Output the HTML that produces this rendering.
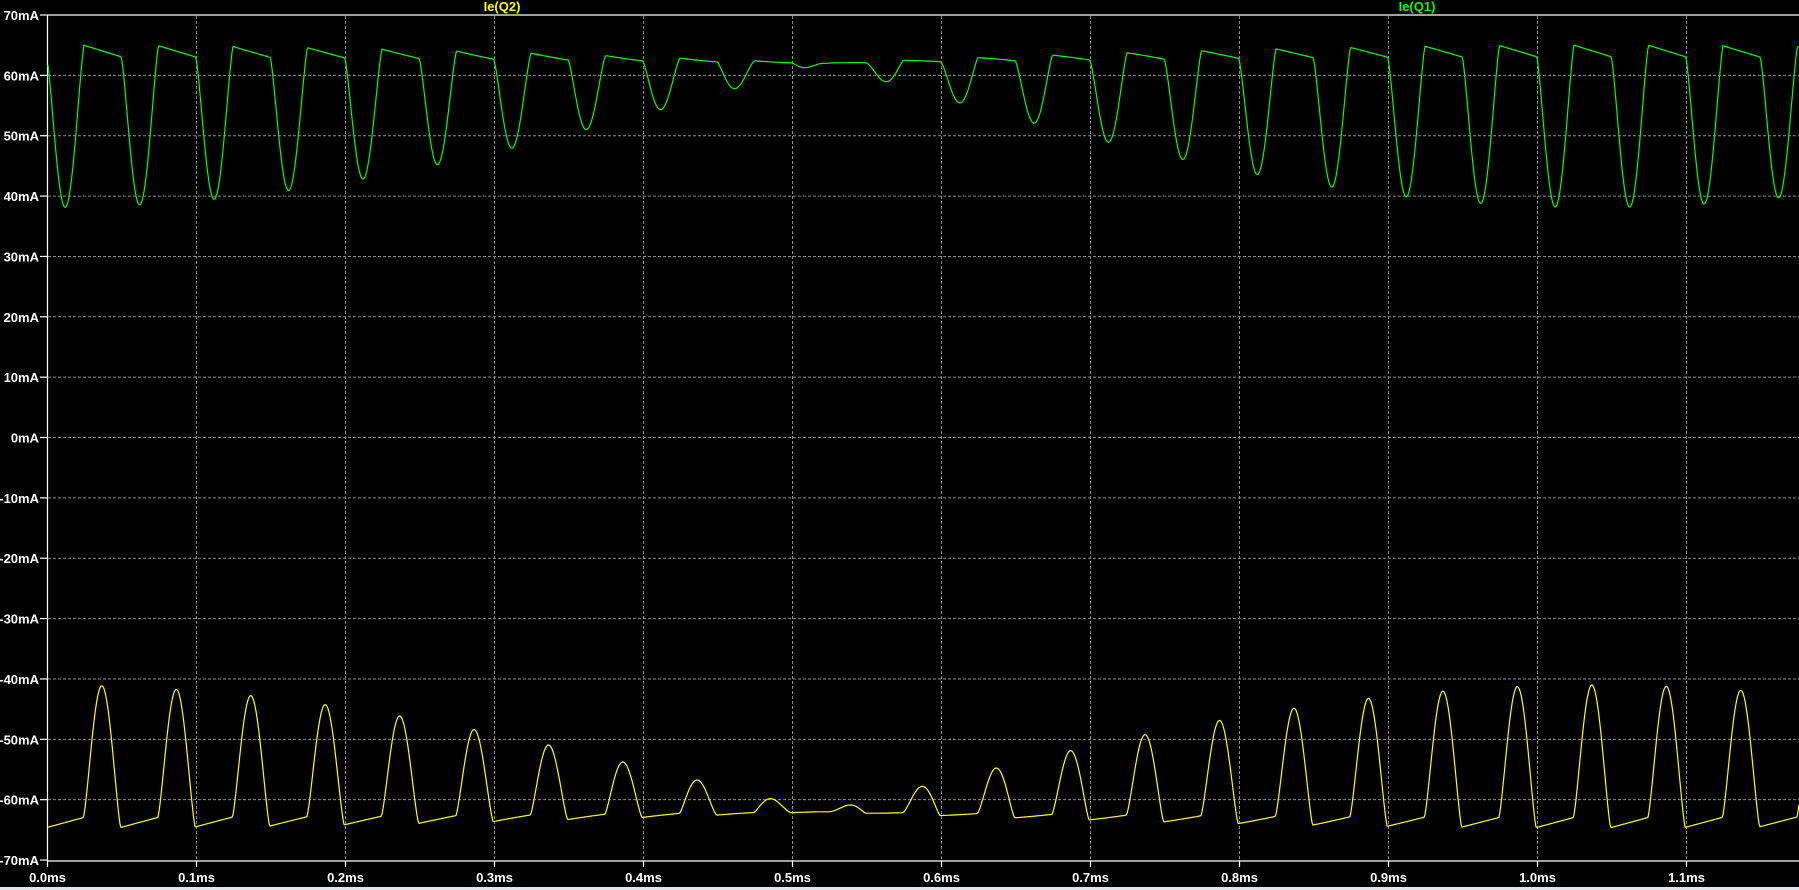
<!DOCTYPE html>
<html><head><meta charset="utf-8"><style>
html,body{margin:0;padding:0;background:#000;width:1799px;height:890px;overflow:hidden}
svg{display:block}
text{font-family:"Liberation Sans",sans-serif;font-weight:bold;font-size:13px;fill:#fff}
</style></head><body>
<svg id="s" width="1799" height="890" xmlns="http://www.w3.org/2000/svg">
<rect x="0" y="0" width="1799" height="890" fill="#000"/>
<g id="grid" stroke="#8a8a8a" stroke-width="1" stroke-dasharray="3,2" fill="none"></g>
<g id="axes" stroke="#fff" stroke-width="1.2" fill="none">
<line x1="47.5" y1="15" x2="1799" y2="15"/>
<line x1="47.5" y1="15" x2="47.5" y2="861"/>
<line x1="47.5" y1="861" x2="1799" y2="861"/>
</g>
<g id="labels"></g>
<text x="502" y="11" text-anchor="middle" style="fill:#ffff00">Ie(Q2)</text>
<text x="1417" y="11" text-anchor="middle" style="fill:#00ff00">Ie(Q1)</text>
<path id="g" fill="none" stroke="#00ff00" stroke-width="1.2"/>
<path id="y" fill="none" stroke="#ffff00" stroke-width="1.2"/>
<rect x="0" y="887" width="1799" height="3" fill="#dfe6ee"/>
</svg>
<script>
var NS="http://www.w3.org/2000/svg";
var grid=document.getElementById('grid'),axes=document.getElementById('axes'),lab=document.getElementById('labels');
function Y(v){return 15+(70-v)*6.036;}
function X(t){return 47.5+t*1490;}
function el(n,a,p){var e=document.createElementNS(NS,n);for(var k in a)e.setAttribute(k,a[k]);p.appendChild(e);return e;}
for(var v=60;v>=-60;v-=10){var y=Y(v);el('line',{x1:48,y1:y,x2:1799,y2:y},grid);}
for(var v=70;v>=-70;v-=10){var y=Y(v);el('line',{x1:40,y1:y,x2:47.5,y2:y},axes);
 var t=el('text',{x:39,y:y+5,'text-anchor':'end'},lab);t.textContent=v+'mA';}
for(var k=0;k<=11;k++){var x=X(k/10);if(k>0)el('line',{x1:x,y1:16,x2:x,y2:860},grid);
 el('line',{x1:x,y1:861,x2:x,y2:867},axes);
 var t=el('text',{x:x,y:882,'text-anchor':'middle'},lab);t.textContent=(k/10).toFixed(1)+'ms';}
function ramp(ph){if(ph>=0.25&&ph<=0.75)return (ph-0.25)/0.5; if(ph>0.75)return 1-(ph-0.75)/0.5; return 0.5-ph/0.5;}
var P=0.05,gp='',yp='';
for(var px=48;px<=1799;px+=1){
 var t=(px-47.5)/1490;
 var d=24*Math.abs(Math.cos(Math.PI*t/1.04));
 var ph=(t-0.012)/P;ph=ph-Math.floor(ph);
 var c=Math.cos(2*Math.PI*ph);var lobe=c>0?Math.pow(c,1.3):0;
 var gv=62+d*0.125-d*1.08*lobe-d*0.08*ramp(ph);
 var ph2=(t-0.0366)/P;ph2=ph2-Math.floor(ph2);
 var c2=Math.cos(2*Math.PI*ph2);var lobe2=c2>0?Math.pow(c2,1.3):0;
 var yv=-62-d*0.11+d*0.95*lobe2+d*0.07*ramp(ph2);
 gp+=(px==48?'M':'L')+px+' '+Y(gv).toFixed(1);
 yp+=(px==48?'M':'L')+px+' '+Y(yv).toFixed(1);
}
document.getElementById('g').setAttribute('d',gp);
document.getElementById('y').setAttribute('d',yp);
</script>
</body></html>
